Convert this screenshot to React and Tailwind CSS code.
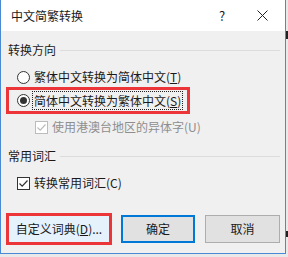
import React from 'react';

const font = { fontFamily: '"Noto Sans CJK SC", "Noto Sans", sans-serif' };

function Radio({ checked }) {
  return (
    <span className="w-[13px] h-[13px] rounded-full border border-[#333] bg-white flex items-center justify-center shrink-0">
      {checked && <span className="w-[7px] h-[7px] rounded-full bg-[#333]" />}
    </span>
  );
}

function Check({ disabled }) {
  const c = disabled ? '#bcbcbc' : '#333';
  return (
    <span className={`w-[13px] h-[13px] border bg-white flex items-center justify-center shrink-0 ${disabled ? 'border-[#bcbcbc]' : 'border-[#333]'}`}>
      <svg width="11" height="11" viewBox="0 0 11 11">
        <path d="M1.5 5.5 L4.2 8.2 L9.5 2.5" fill="none" stroke={c} strokeWidth="1.2" />
      </svg>
    </span>
  );
}

function GroupLabel({ children }) {
  return (
    <div className="flex items-center h-[16px] pl-[7px] pr-[5px] gap-[4px]">
      <span className="text-[12px] leading-[16px] text-[#1a1a1a]">{children}</span>
      <div className="flex-1 h-px bg-[#dcdcdc]" />
    </div>
  );
}

export default function App() {
  return (
    <div className="w-[288px] h-[257px] bg-[#e9e9e9] flex" style={font}>
      <div className="w-[286px] h-[254px] border-l border-r border-b border-[#4a8ad4] bg-[#f0f0f0] flex flex-col">
        <div className="h-[31px] bg-white flex items-center pl-[10px] text-[12px] text-[#1a1a1a]">
          <span className="flex-1">中文简繁转换</span>
          <span className="w-[20px] text-center text-[13px] mr-[25px]">?</span>
          <svg width="11" height="11" viewBox="0 0 11 11" className="mr-[17px]">
            <path d="M0.5 0.5 L10.5 10.5 M10.5 0.5 L0.5 10.5" stroke="#222" strokeWidth="1" />
          </svg>
        </div>

        <div className="mt-[11px]">
          <GroupLabel>转换方向</GroupLabel>
        </div>

        <div className="mt-[9px] h-[20px] flex items-center pl-[16px] gap-[4px] text-[12px] text-[#1a1a1a]">
          <Radio />
          <span>繁体中文转换为简体中文(<span className="underline">T</span>)</span>
        </div>

        <div className="ml-[5px] w-[184px] h-[27px] border-[3px] border-[#ec3538] flex items-center pl-[8px] gap-[2px] text-[12px] text-[#1a1a1a]">
          <Radio checked />
          <span className="border border-dotted border-[#222] px-[1px] leading-[17px]">简体中文转换为繁体中文(<span className="underline">S</span>)</span>
        </div>

        <div className="mt-[3px] h-[20px] flex items-center pl-[34px] gap-[4px] text-[12px] text-[#8e8e8e]">
          <Check disabled />
          <span>使用港澳台地区的异体字(U)</span>
        </div>

        <div className="mt-[11px]">
          <GroupLabel>常用词汇</GroupLabel>
        </div>

        <div className="mt-[9px] h-[20px] flex items-center pl-[16px] gap-[4px] text-[12px] text-[#1a1a1a]">
          <Check />
          <span>转换常用词汇(C)</span>
        </div>

        <div className="mt-[20px] h-[32px] flex items-center pl-[5px] text-[12px] text-[#1a1a1a]">
          <div className="w-[106px] h-[32px] border-[3px] border-[#ec3538] bg-[#e5f1fb] flex items-center justify-center">
            自定义词典(<span className="underline">D</span>)...
          </div>
          <div className="ml-[9px] w-[74px] h-[28px] border-2 border-[#0078d7] bg-[#e1e1e1] flex items-center justify-center">
            确定
          </div>
          <div className="ml-[10px] w-[75px] h-[28px] border border-[#adadad] bg-[#e1e1e1] flex items-center justify-center">
            取消
          </div>
        </div>
      </div>
      <div className="flex-1 flex flex-col">
        <div className="h-[31px]" />
        <div className="h-[8px] bg-[#222]" />
        <div className="flex-1" />
        <div className="h-[6px] bg-[#222] mb-[20px]" />
      </div>
    </div>
  );
}
